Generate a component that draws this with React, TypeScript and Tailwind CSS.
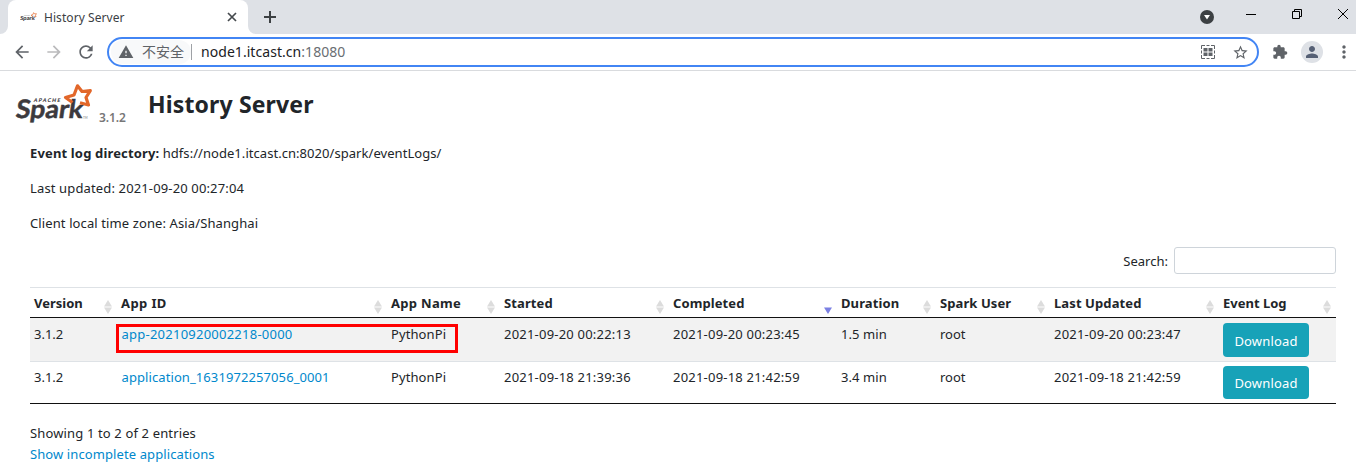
import React from "react";
import {
  MdArrowBack,
  MdArrowForward,
  MdExtension,
  MdMoreVert,
  MdPerson,
  MdRefresh,
  MdStarBorder,
  MdWarning,
} from "react-icons/md";

type Sort = "both" | "desc";

const columns: { label: string; width: string; track: string; sort: Sort }[] = [
  { label: "Version", width: "w-[87px]", track: "tracking-normal", sort: "both" },
  { label: "App ID", width: "w-[270px]", track: "tracking-[0.4px]", sort: "both" },
  { label: "App Name", width: "w-[113px]", track: "tracking-[0.3px]", sort: "both" },
  { label: "Started", width: "w-[169px]", track: "tracking-[0.1px]", sort: "both" },
  { label: "Completed", width: "w-[168px]", track: "tracking-[0.1px]", sort: "desc" },
  { label: "Duration", width: "w-[99px]", track: "tracking-[0.1px]", sort: "both" },
  { label: "Spark User", width: "w-[114px]", track: "tracking-[0.08px]", sort: "both" },
  { label: "Last Updated", width: "w-[169px]", track: "tracking-[0.1px]", sort: "both" },
  { label: "Event Log", width: "w-[117px]", track: "tracking-normal", sort: "both" },
];

const rows = [
  {
    version: "3.1.2",
    id: "app-20210920002218-0000",
    idTrack: "tracking-[0.24px]",
    name: "PythonPi",
    started: "2021-09-20 00:22:13",
    completed: "2021-09-20 00:23:45",
    duration: "1.5 min",
    user: "root",
    updated: "2021-09-20 00:23:47",
    highlighted: true,
  },
  {
    version: "3.1.2",
    id: "application_1631972257056_0001",
    idTrack: "tracking-[0.09px]",
    name: "PythonPi",
    started: "2021-09-18 21:39:36",
    completed: "2021-09-18 21:42:59",
    duration: "3.4 min",
    user: "root",
    updated: "2021-09-18 21:42:59",
    highlighted: false,
  },
];

function SparkLogo({ className }: { className: string }) {
  return (
    <svg viewBox="0 0 78 41" className={className} aria-label="Apache Spark">
      <text x="0" y="0" transform="translate(18.5 18.500) skewX(-12)" fontFamily="Lato" fontWeight="900" fontSize="5.2" textLength="26.500" fill="#3c3a3e">APACHE</text>
      <text x="0" y="0" transform="translate(0 35) skewX(-8)" fontFamily="Lato" fontWeight="700" fontSize="25.500" textLength="67" lengthAdjust="spacingAndGlyphs" fill="#3c3a3e" stroke="#3c3a3e" strokeWidth="0.500">Spark</text>
      <path d="M57.500 19.500 L50.500 14.500 L59 12 L62.500 2.800 L67 8.500 L75.300 7.700 L71 14.500 L73.500 22 L65 19.800" fill="none" stroke="#e2672a" strokeWidth="3.200" strokeLinejoin="round" />
      <text x="68" y="35.500" fontFamily="Lato" fontSize="3" fill="#777">TM</text>
    </svg>
  );
}

function SortIcon({ sort }: { sort: Sort }) {
  return (
    <svg viewBox="0 0 8 14" className="mt-[2px] h-[14px] w-2 shrink-0">
      {sort === "both" && <path d="M4 0 8 6.500H0Z" fill="#dcdcdc" />}
      <path d="M0 7.500H8L4 14Z" fill={sort === "desc" ? "#7b80e3" : "#dcdcdc"} />
    </svg>
  );
}

function TabStrip() {
  return (
    <div className="flex h-[34px] bg-[#dee1e6]">
      <svg viewBox="0 0 8 34" className="h-[34px] w-2">
        <path d="M8 26A8 8 0 0 1 0 34H8Z" fill="#fff" />
      </svg>
      <div className="flex w-[240px] items-center rounded-t-lg bg-white pr-[11px] pl-3">
        <SparkLogo className="mb-[2px] h-[13px] w-[17px]" />
        <span className="ml-[7px] text-[12px] text-[#3c4043] tracking-[0.06px]">History Server</span>
        <svg viewBox="0 0 10 10" className="ml-auto h-[10px] w-[10px]">
          <path d="M1 1 9 9M9 1 1 9" stroke="#45494d" strokeWidth="1.700" />
        </svg>
      </div>
      <svg viewBox="0 0 8 34" className="h-[34px] w-2">
        <path d="M0 26A8 8 0 0 0 8 34H0Z" fill="#fff" />
      </svg>
      <svg viewBox="0 0 12 12" className="mt-[11px] ml-2 h-3 w-3">
        <path d="M6 0V12M0 6H12" stroke="#3c4043" strokeWidth="2" />
      </svg>
      <svg viewBox="0 0 14 14" className="mt-[10px] ml-auto h-[14px] w-[14px]">
        <circle cx="7" cy="7" r="7" fill="#3c4043" />
        <path d="M4 5H10L7 9.500Z" fill="#fff" />
      </svg>
      <svg viewBox="0 0 10 10" className="mt-[9px] ml-[32px] h-[10px] w-[10px]">
        <path d="M0 5.500H10" stroke="#000" />
      </svg>
      <svg viewBox="0 0 10 10" className="mt-[9px] ml-[36px] h-[10px] w-[10px]" fill="none" stroke="#000">
        <path d="M0.500 2.500H7.500V9.500H0.500ZM2.500 2.500V0.500H9.500V7.500H7.500" />
      </svg>
      <svg viewBox="0 0 10 10" className="mt-[9px] mr-2 ml-[36px] h-[10px] w-[10px]">
        <path d="M0 0 10 10M10 0 0 10" stroke="#000" />
      </svg>
    </div>
  );
}

function Toolbar() {
  return (
    <div className="flex h-[37px] items-center border-b border-[#d9dbde] bg-white">
      <MdArrowBack className="ml-3 h-5 w-5 text-[#5f6368]" />
      <MdArrowForward className="ml-3 h-5 w-5 text-[#bababc]" />
      <MdRefresh className="ml-3 h-5 w-5 text-[#5f6368]" />
      <div className="ml-[11px] flex h-[30px] w-[1152px] items-center rounded-full border-2 border-[#4285f4] bg-white pl-[2px]">
        <div className="flex h-[24px] items-center rounded-full bg-[#f8f9fa] pl-[7px] text-[14px] text-[#5f6368]">
          <MdWarning className="h-4 w-4" />
          <span className="mb-px ml-[8px] w-[49px] whitespace-nowrap">不安全</span>
        </div>
        <div className="h-4 w-px bg-[#9fa2a6]" />
        <span className="mb-px ml-[9px] text-[14px] text-[#202124] tracking-[0.05px]">
          node1.itcast.cn<span className="text-[#6a6e73]">:18080</span>
        </span>
        <svg viewBox="0 0 14 14" className="ml-auto h-[14px] w-[14px]" fill="none" stroke="#5f6368">
          <path d="M0.500 4V0.500H4M5.500 0.500H8.500M10 0.500H13.500V4M13.500 5.500V8.500M13.500 10V13.500H10M8.500 13.500H5.500M4 13.500H0.500V10M0.500 8.500V5.500" />
          <path d="M2.500 3H6.500V6.500H2.500ZM7.500 3H11.500V6.500H7.500ZM2.500 7.500H6.500V11H2.500ZM7.500 7.500H11.500V11H7.500Z" fill="#5f6368" stroke="none" />
        </svg>
        <MdStarBorder className="mr-[8px] ml-[17px] h-[17px] w-[17px] text-[#5f6368]" />
      </div>
      <MdExtension className="ml-[13px] h-4 w-4 text-[#5f6368]" />
      <div className="ml-[13px] flex h-[22px] w-[22px] items-center justify-center rounded-full bg-[#dee1e6]">
        <MdPerson className="h-[18px] w-[18px] text-[#566075]" />
      </div>
      <MdMoreVert className="ml-[11px] h-5 w-5 text-[#5f6368]" />
    </div>
  );
}

export default function App() {
  return (
    <div className="h-[468px] w-[1356px] overflow-hidden bg-white font-['Noto_Sans','Noto_Sans_CJK_SC',sans-serif] text-[13px] leading-[21px] text-[#212529]">
      <TabStrip />
      <Toolbar />
      <header className="flex h-[72px] pt-[12px] pl-[15px]">
        <SparkLogo className="h-[41px] w-[78px]" />
        <span className="mt-[24px] ml-[6px] w-[49px] text-[12px] font-semibold tracking-[-0.1px] text-[#777]">3.1.2</span>
        <h1 className="mt-[6px] text-[23px] leading-[30px] font-bold tracking-[0.14px] whitespace-nowrap">History Server</h1>
      </header>
      <main className="pr-[20px] pl-[30px]">
        <ul className="flex flex-col gap-[14px]">
          <li>
            <strong className="font-bold tracking-[0.15px]">Event log directory:</strong>{" "}
            <span className="tracking-[0.05px]">hdfs://node1.itcast.cn:8020/spark/eventLogs/</span>
          </li>
          <li className="tracking-[0.14px]">Last updated: 2021-09-20 00:27:04</li>
          <li className="tracking-[0.11px]">Client local time zone: Asia/Shanghai</li>
        </ul>
        <label className="mt-[12px] flex h-[28px] items-center justify-end">
          <span className="mt-[2px]">Search:</span>
          <input className="ml-[6px] h-[27px] w-[162px] rounded-[3px] border border-[#ced4da]" />
        </label>
        <div className="relative mt-[13px]">
          <table className="w-[1306px] table-fixed border-separate border-spacing-0 text-left">
            <thead>
              <tr className="h-[31px]">
                {columns.map((c) => (
                  <th key={c.label} className={"border-t border-b border-t-[#dee2e6] border-b-[#111] p-0 pr-[5px] pl-1 font-bold " + c.width}>
                    <div className="flex h-[29px] items-center justify-between">
                      <span className={"pt-[2px] " + c.track}>{c.label}</span>
                      <div className="pt-[6px]">
                        <SortIcon sort={c.sort} />
                      </div>
                    </div>
                  </th>
                ))}
              </tr>
            </thead>
            <tbody>
              {rows.map((r) => (
                <tr
                  key={r.id}
                  className={
                    r.highlighted
                      ? "h-[44px] bg-[#f2f2f2] *:border-b *:border-[#dee2e6] *:pt-[6px] *:pl-1 *:align-top"
                      : "h-[42px] *:border-b *:border-[#111] *:pt-[5px] *:pl-1 *:align-top"
                  }
                >
                  <td>{r.version}</td>
                  <td>
                    <a className={"pl-[0.5px] text-[#0088cc] " + r.idTrack}>{r.id}</a>
                  </td>
                  <td className="tracking-[0.1px]">{r.name}</td>
                  <td className="tracking-[0.21px]">{r.started}</td>
                  <td className="tracking-[0.21px]">{r.completed}</td>
                  <td className="tracking-[0.08px]">{r.duration}</td>
                  <td>{r.user}</td>
                  <td className="tracking-[0.21px]">{r.updated}</td>
                  <td>
                    <button
                      className={
                        r.highlighted
                          ? "-mt-px block h-[34px] w-[86px] rounded-[4px] bg-[#17a2b8] pt-[2px] tracking-[0.15px] text-white"
                          : "-mt-px block h-[33px] w-[86px] rounded-[4px] bg-[#17a2b8] pt-[2px] tracking-[0.15px] text-white"
                      }
                    >
                      Download
                    </button>
                  </td>
                </tr>
              ))}
            </tbody>
          </table>
          <div className="absolute top-[37px] left-[86px] h-[29px] w-[342px] border-[3px] border-[#ff0000]" />
        </div>
        <p className="mt-[19px] tracking-[0.14px]">Showing 1 to 2 of 2 entries</p>
        <a className="block tracking-[0.1px] text-[#0088cc]">Show incomplete applications</a>
      </main>
    </div>
  );
}
